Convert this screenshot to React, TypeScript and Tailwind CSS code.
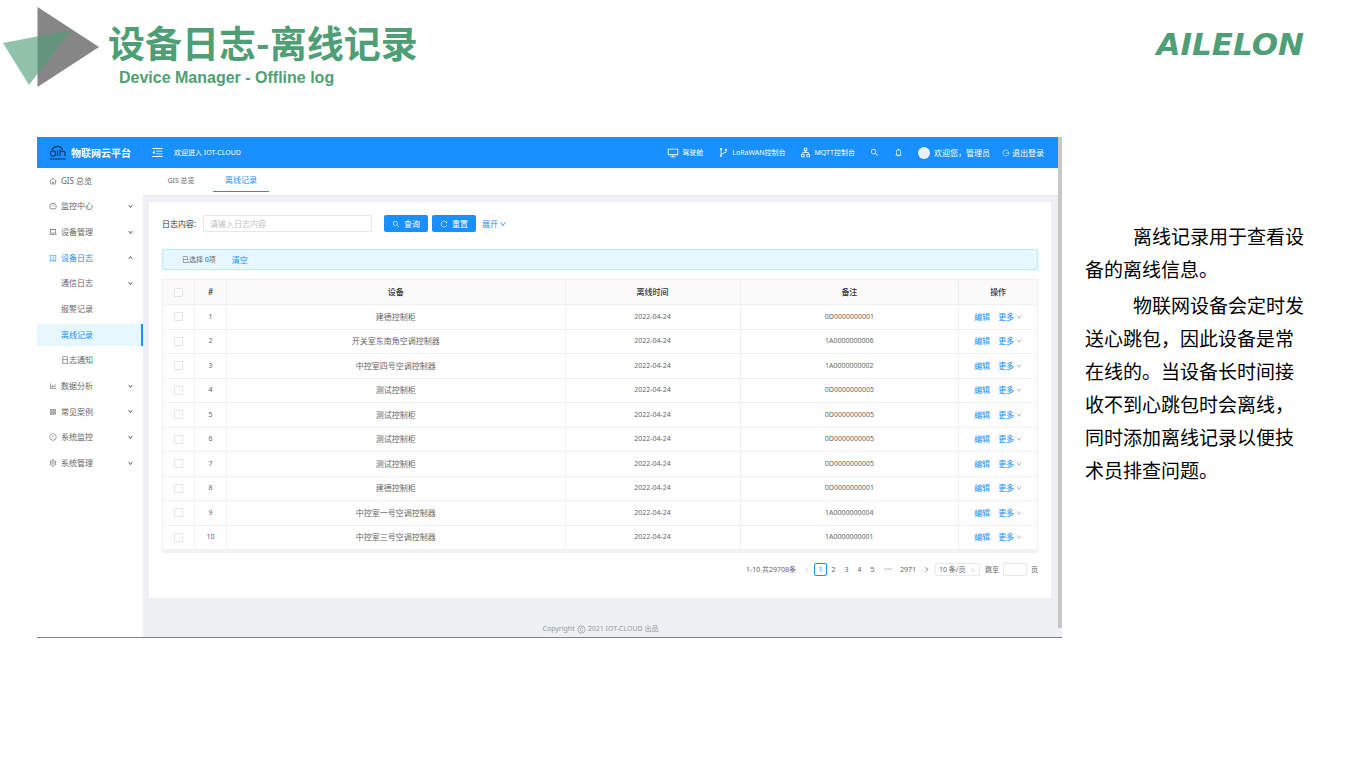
import type { ReactNode } from 'react';
import {
  AiOutlineApartment,
  AiOutlineBarChart,
  AiOutlineBell,
  AiOutlineBranches,
  AiOutlineCopyright,
  AiOutlineDashboard,
  AiOutlineDesktop,
  AiOutlineDown,
  AiOutlineExclamationCircle,
  AiOutlineHome,
  AiOutlineLaptop,
  AiOutlineLeft,
  AiOutlineLogout,
  AiOutlineMenuFold,
  AiOutlineProfile,
  AiOutlineQrcode,
  AiOutlineReload,
  AiOutlineRight,
  AiOutlineSearch,
  AiOutlineSetting,
  AiOutlineUp,
} from 'react-icons/ai';

interface MenuItem {
  label: string;
  icon?: ReactNode;
  arrow?: 'up' | 'down';
  state?: 'open' | 'selected';
}

interface OfflineLog {
  id: number;
  device: string;
  date: string;
  remark: string;
}

const menuItems: MenuItem[] = [
  { label: 'GIS 总览', icon: <AiOutlineHome /> },
  { label: '监控中心', icon: <AiOutlineDashboard />, arrow: 'down' },
  { label: '设备管理', icon: <AiOutlineLaptop />, arrow: 'down' },
  { label: '设备日志', icon: <AiOutlineProfile />, arrow: 'up', state: 'open' },
  { label: '通信日志', arrow: 'down' },
  { label: '报警记录' },
  { label: '离线记录', state: 'selected' },
  { label: '日志通知' },
  { label: '数据分析', icon: <AiOutlineBarChart />, arrow: 'down' },
  { label: '常见案例', icon: <AiOutlineQrcode />, arrow: 'down' },
  { label: '系统监控', icon: <AiOutlineExclamationCircle />, arrow: 'down' },
  { label: '系统管理', icon: <AiOutlineSetting />, arrow: 'down' },
];

const logs: OfflineLog[] = [
  { id: 1, device: '建德控制柜', date: '2022-04-24', remark: '0D0000000001' },
  { id: 2, device: '开关室东南角空调控制器', date: '2022-04-24', remark: '1A0000000006' },
  { id: 3, device: '中控室四号空调控制器', date: '2022-04-24', remark: '1A0000000002' },
  { id: 4, device: '测试控制柜', date: '2022-04-24', remark: '0D0000000005' },
  { id: 5, device: '测试控制柜', date: '2022-04-24', remark: '0D0000000005' },
  { id: 6, device: '测试控制柜', date: '2022-04-24', remark: '0D0000000005' },
  { id: 7, device: '测试控制柜', date: '2022-04-24', remark: '0D0000000005' },
  { id: 8, device: '建德控制柜', date: '2022-04-24', remark: '0D0000000001' },
  { id: 9, device: '中控室一号空调控制器', date: '2022-04-24', remark: '1A0000000004' },
  { id: 10, device: '中控室三号空调控制器', date: '2022-04-24', remark: '1A0000000001' },
];

function SlideHeader() {
  return (
    <header className="flex items-start justify-between pr-[46px] pt-[7px] text-[#4f9f76]">
      <div className="flex items-start">
        <svg className="h-20 w-[102px] shrink-0" viewBox="0 0 102 80" aria-hidden="true">
          <path d="M37.5 0 99 40 37.5 80z" fill="#868686" />
          <path d="M3 36 71 23 29 78z" fill="#4f9f76" fillOpacity="0.63" />
        </svg>
        <div className="pl-[6px] pt-[14px]">
          <h1 className="font-['Noto_Sans_CJK_SC',sans-serif] text-[37px] font-bold leading-[43px]">
            设备日志-离线记录
          </h1>
          <p className="mt-[2px] pl-[11px] font-['Liberation_Sans',sans-serif] text-base font-bold leading-6">
            Device Manager - Offline log
          </p>
        </div>
      </div>
      <div className="pt-[19px] font-['DejaVu_Sans',sans-serif] text-[31px] font-bold italic leading-9">AILELON</div>
    </header>
  );
}

function CloudLogo() {
  return (
    <svg className="h-4 w-[18px]" viewBox="0 0 18 16" fill="none" stroke="#0b3f78" strokeWidth="1.3" aria-hidden="true">
      <circle cx="4" cy="8.5" r="2.6" />
      <path d="M3 5C4 2.5 6 1.500 8.500 1.500S13 3 13.500 5" />
      <path d="M8.500 5.500v5.500M11 11V4.500M11 7.500c1-2 5-2 5 .5v3" />
      <path d="M1 14h16" strokeDasharray="2 .6" />
    </svg>
  );
}

function TopBar() {
  return (
    <div className="flex h-[31px] items-center bg-[#1890ff] text-[7px] text-white">
      <div className="flex w-[106px] items-center gap-1 pl-3">
        <CloudLogo />
        <span className="text-[10px] font-bold">物联网云平台</span>
      </div>
      <button type="button" aria-label="收起菜单" className="ml-2 text-[13px]">
        <AiOutlineMenuFold />
      </button>
      <span className="ml-[10px]">欢迎进入 IOT-CLOUD</span>
      <nav className="ml-auto flex items-center gap-[15px] pr-[14px]">
        <a href="#cockpit" className="flex items-center gap-[3px]">
          <AiOutlineDesktop className="text-[12px]" />
          驾驶舱
        </a>
        <a href="#lorawan" className="flex items-center gap-[3px]">
          <AiOutlineBranches className="text-[11px]" />
          LoRaWAN控制台
        </a>
        <a href="#mqtt" className="flex items-center gap-[3px]">
          <AiOutlineApartment className="text-[11px]" />
          MQTT控制台
        </a>
        <button type="button" aria-label="搜索" className="text-[9px]">
          <AiOutlineSearch />
        </button>
        <button type="button" aria-label="通知" className="text-[9px]">
          <AiOutlineBell />
        </button>
        <div className="flex items-center gap-3 text-[8px]">
          <a href="#me" className="flex items-center gap-1">
            <span className="h-3 w-3 rounded-full bg-[#e8f1fa]" />
            欢迎您，管理员
          </a>
          <a href="#logout" className="flex items-center gap-[2px]">
            <AiOutlineLogout />
            退出登录
          </a>
        </div>
      </nav>
    </div>
  );
}

function SideMenu() {
  return (
    <nav className="w-[106px] shrink-0 bg-white">
      <ul className="grid h-[308px] grid-rows-12">
        {menuItems.map((item) => (
          <li key={item.label} className="flex items-center">
            <a
              href="#menu"
              className={`flex h-[22px] w-full items-center pl-3 ${
                item.state === 'selected' ? 'border-r-2 border-[#1890ff] bg-[#e6f7ff] text-[#1890ff]' : ''
              } ${item.state === 'open' ? 'text-[#1890ff]' : ''}`}
            >
              <span className="w-3">{item.icon}</span>
              <span className="flex-1">{item.label}</span>
              <span className="pr-[10px] text-[5px] text-[#595959]">
                {item.arrow === 'down' && <AiOutlineDown strokeWidth="80" />}
                {item.arrow === 'up' && <AiOutlineUp strokeWidth="80" />}
              </span>
            </a>
          </li>
        ))}
      </ul>
    </nav>
  );
}

function SearchForm() {
  return (
    <form className="flex items-center" onSubmit={(e) => e.preventDefault()}>
      <label htmlFor="content" className="w-[41px] text-[#333]">
        日志内容:
      </label>
      <input
        id="content"
        placeholder="请输入日志内容"
        className="h-[17px] w-[169px] rounded-[2px] border border-[#e8e8e8] px-[6px] outline-none placeholder:text-[#bfbfbf]"
      />
      <button
        type="submit"
        className="ml-3 flex h-[17px] w-11 items-center justify-center gap-1 rounded-[2px] bg-[#1890ff] text-white"
      >
        <AiOutlineSearch />
        查询
      </button>
      <button
        type="reset"
        className="ml-1 flex h-[17px] w-11 items-center justify-center gap-1 rounded-[2px] bg-[#1890ff] text-white"
      >
        <AiOutlineReload />
        重置
      </button>
      <button type="button" className="ml-[6px] flex items-center gap-px text-[#1890ff]">
        展开
        <AiOutlineDown />
      </button>
    </form>
  );
}

function Checkbox({ label }: { label: string }) {
  return (
    <input
      type="checkbox"
      aria-label={label}
      className="mx-auto block h-[9px] w-[9px] appearance-none rounded-[1px] border border-[#e4e4e4] bg-white"
    />
  );
}

function LogTable() {
  const cell = 'border-r border-b border-[#f0f0f0] p-0';

  return (
    <table className="mt-[9px] h-[271px] w-full table-fixed border-separate border-spacing-0 border-l border-t border-[#f0f0f0] text-center">
      <colgroup>
        <col className="w-8" />
        <col className="w-8" />
        <col />
        <col className="w-[20%]" />
        <col className="w-[25%]" />
        <col className="w-[9%]" />
      </colgroup>
      <thead className="bg-[#fafafa] text-[#333]">
        <tr className="h-[25px]">
          <th className={cell}>
            <Checkbox label="全选" />
          </th>
          <th className={`${cell} font-medium`}>#</th>
          <th className={`${cell} font-medium`}>设备</th>
          <th className={`${cell} font-medium`}>离线时间</th>
          <th className={`${cell} font-medium`}>备注</th>
          <th className={`${cell} font-medium`}>操作</th>
        </tr>
      </thead>
      <tbody>
        {logs.map((log) => (
          <tr key={log.id}>
            <td className={cell}>
              <Checkbox label={`选择 ${log.id}`} />
            </td>
            <td className={`${cell} text-[7px]`}>{log.id}</td>
            <td className={cell}>{log.device}</td>
            <td className={`${cell} text-[7px]`}>{log.date}</td>
            <td className={`${cell} text-[7px]`}>{log.remark}</td>
            <td className={cell}>
              <div className="flex items-center justify-center gap-2 text-[#1890ff]">
                <a href="#edit">编辑</a>
                <a href="#more" className="flex items-center gap-[2px]">
                  更多
                  <AiOutlineDown className="text-[6px] text-[#8c8c8c]" />
                </a>
              </div>
            </td>
          </tr>
        ))}
      </tbody>
    </table>
  );
}

function Pagination() {
  return (
    <div className="mt-[10px] flex items-center justify-end text-[7px]">
      <span>1-10 共29708条</span>
      <button type="button" aria-label="上一页" className="ml-2 mr-1 text-[6px] text-[#bfbfbf]">
        <AiOutlineLeft />
      </button>
      <button type="button" className="h-[13px] w-[13px] rounded-[2px] border border-[#1890ff] text-[#1890ff]">
        1
      </button>
      {[2, 3, 4, 5].map((page) => (
        <button type="button" key={page} className="w-[13px]">
          {page}
        </button>
      ))}
      <span className="w-[18px] text-center text-[#bfbfbf]">•••</span>
      <button type="button" className="w-[22px]">
        2971
      </button>
      <button type="button" aria-label="下一页" className="w-[14px] pl-1">
        <AiOutlineRight />
      </button>
      <span className="relative ml-[2px]">
        <select
          aria-label="每页条数"
          className="block h-[13px] w-[45px] appearance-none rounded-[2px] border border-[#e8e8e8] bg-white pl-[3px]"
        >
          <option>10 条/页</option>
        </select>
        <AiOutlineDown className="pointer-events-none absolute right-1 top-[4px] text-[6px] text-[#bfbfbf]" />
      </span>
      <label htmlFor="jump" className="ml-[5px]">
        跳至
      </label>
      <input id="jump" className="mx-1 h-[13px] w-6 rounded-[2px] border border-[#e8e8e8] outline-none" />
      <span>页</span>
    </div>
  );
}

function OfflineLogPage() {
  return (
    <div className="flex min-w-0 flex-1 border-b border-[#7d8288] bg-[#eef0f3] text-[8px] leading-3 text-[#666]">
      <div className="min-w-0 flex-1">
        <TopBar />
        <div className="flex h-[469px]">
          <SideMenu />
          <div className="min-w-0 flex-1">
            <div className="flex h-7 items-stretch border-b border-[#e4e6e9] bg-white pl-[10px]">
              <a href="#gis" className="flex w-14 items-center justify-center pb-[2px] text-[7px]">
                GIS 总览
              </a>
              <a
                href="#offline"
                className="mb-[3px] ml-1 flex w-14 items-center justify-center border-b border-[#1890ff] text-[#1890ff]"
              >
                离线记录
              </a>
            </div>
            <main className="ml-[6px] mr-[7px] mt-[6px] h-[396px] bg-white px-[13px] pt-[13px]">
              <SearchForm />
              <div className="mt-[17px] flex h-[21px] items-center gap-4 rounded-[2px] border border-[#bae7ff] bg-[#e6f7ff] px-[19px] text-[7px]">
                <span>
                  已选择 <b className="font-medium text-[#1890ff]">0</b>项
                </span>
                <button type="button" className="text-[8px] text-[#1890ff]">
                  清空
                </button>
              </div>
              <LogTable />
              <div className="h-[3px] bg-[#f2f2f2]" />
              <Pagination />
            </main>
            <footer className="flex items-center justify-center gap-[2px] pt-[25px] text-[7px] text-[#999]">
              Copyright <AiOutlineCopyright className="text-[9px]" /> 2021 IOT-CLOUD 出品
            </footer>
          </div>
        </div>
      </div>
      <div className="mb-[9px] w-1 bg-[#c8c8c8]" />
    </div>
  );
}

export default function App() {
  return (
    <div className="min-h-screen bg-white font-['Noto_Sans','Noto_Sans_CJK_SC',sans-serif]">
      <SlideHeader />
      <div className="flex items-start gap-[23px] pb-16 pl-[37px] pr-[45px] pt-[47px]">
        <OfflineLogPage />
        <aside className="w-[220px] shrink-0 pt-[84px] text-[19px] leading-[33px] text-black">
          <p className="indent-12">离线记录用于查看设备的离线信息。</p>
          <p className="mt-[3px] indent-12">
            物联网设备会定时发送心跳包，因此设备是常在线的。当设备长时间接收不到心跳包时会离线，同时添加离线记录以便技术员排查问题。
          </p>
        </aside>
      </div>
    </div>
  );
}
